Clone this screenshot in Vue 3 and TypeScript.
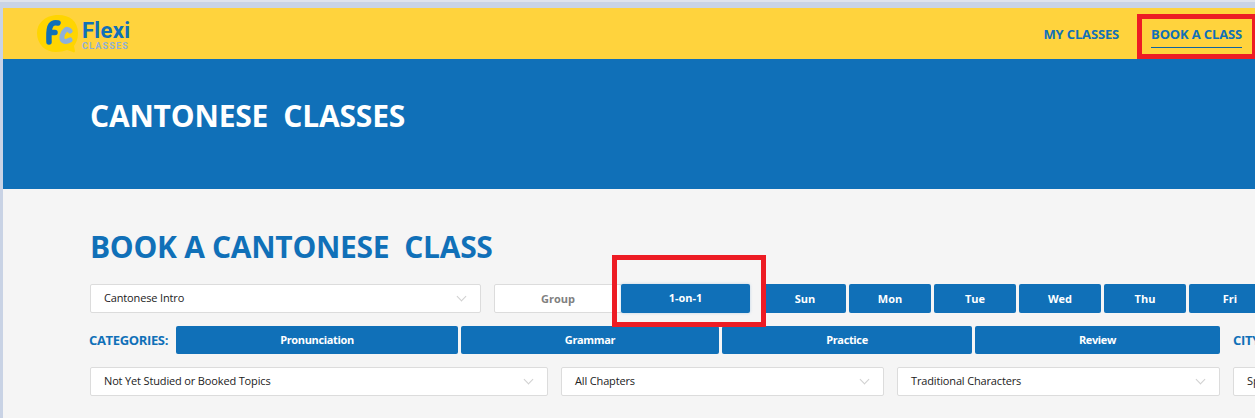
<script setup lang="ts">
const days = ['Sun', 'Mon', 'Tue', 'Wed', 'Thu', 'Fri']
const categories = ['Pronunciation', 'Grammar', 'Practice', 'Review']
const filters = [
  { label: 'Not Yet Studied or Booked Topics', w: 458 },
  { label: 'All Chapters', w: 323 },
  { label: 'Traditional Characters', w: 323 },
]
</script>

<template>
  <div class="page">
    <header class="topbar">
      <div class="logo">
        <svg class="logo-mark" width="42" height="40" viewBox="0 0 42 40">
          <path d="M19 1C31 0 41 6 41 19c0 6-2 10-4 13l1 5c0 1-1 2-2 1l-6-2c-3 1-7 2-11 2C8 38 0 30 0 19 0 9 8 2 19 1Z" fill="#ffd500" />
          <path d="M12 28C12 22 11 15 14 11C16 8 19 8.500 21 9M12 18.500H18" fill="none" stroke="#1070b8" stroke-width="5.500" stroke-linecap="round" stroke-linejoin="round" />
          <path d="M33 17C30 13 26 17 25 22C24 27 28 29 33 26" fill="none" stroke="#8fb0d8" stroke-width="5" stroke-linecap="round" />
        </svg>
        <div class="logo-text">
          <span class="logo-flexi">Flexi</span>
          <span class="logo-classes">CLASSES</span>
        </div>
      </div>
      <nav class="nav">
        <a class="nav-link">MY CLASSES</a>
        <a class="nav-link nav-active">BOOK A CLASS</a>
      </nav>
    </header>

    <section class="hero">
      <h1>CANTONESE&nbsp; CLASSES</h1>
    </section>

    <main class="content">
      <h2>BOOK A CANTONESE&nbsp; CLASS</h2>

      <div class="row row-one">
        <div class="select course"><span>Cantonese Intro</span><i class="chev"></i></div>
        <div class="type-group">
          <button class="btn-light">Group</button>
          <button class="btn type-active">1-on-1</button>
        </div>
        <div class="days">
          <button v-for="d in days" :key="d" class="btn day">{{ d }}</button>
        </div>
      </div>

      <div class="row row-two">
        <span class="label">CATEGORIES:</span>
        <div class="cats">
          <button v-for="(c, i) in categories" :key="c" class="btn" :class="'cat' + i">{{ c }}</button>
        </div>
        <span class="label city">CITY:</span>
      </div>

      <div class="row row-three">
        <div v-for="f in filters" :key="f.label" class="select" :style="{ width: f.w + 'px' }">
          <span>{{ f.label }}</span><i class="chev"></i>
        </div>
        <div class="select city-select"><span>Spanish</span></div>
      </div>
    </main>

    <div class="mark mark-nav"></div>
    <div class="mark mark-type"></div>
  </div>
</template>

<style>
html, body { margin: 0; overflow: hidden; }
</style>

<style scoped>
.page {
  position: relative;
  width: 1255px;
  height: 418px;
  overflow: hidden;
  box-sizing: border-box;
  padding: 6px 0 0 3px;
  border-top: 2px solid #dfe3eb;
  background: #c9d3e5;
  font-family: "Open Sans", "Noto Sans", sans-serif;
}
.topbar {
  height: 51px;
  background: #ffd33d;
  display: flex;
  align-items: center;
  justify-content: space-between;
}
.logo { display: flex; align-items: center; margin-left: 34px; margin-top: 1px; }
.logo-mark { display: block; }
.logo-text { display: flex; flex-direction: column; margin: 4px 0 0 3px; }
.logo-flexi { font: 700 22px/20px Roboto, sans-serif; color: #1070b8; letter-spacing: 0.3px; }
.logo-classes { font: 700 9px/10px Roboto, sans-serif; color: #8fb0d8; letter-spacing: 1.2px; }
.nav { display: flex; align-items: center; }
.nav-link {
  font-size: 13px;
  font-weight: 700;
  color: #1070b8;
  letter-spacing: -0.15px;
  line-height: 18px;
  white-space: nowrap;
  margin-top: 6px;
  padding-bottom: 4px;
  border-bottom: 1px solid transparent;
}
.nav-link:first-child { margin-right: 32px; }
.nav-active {
  margin-right: 13px;
  border-bottom-color: #0f639f;
}
.hero {
  height: 130px;
  background: #1070b8;
  box-sizing: border-box;
  padding: 38px 0 0 87px;
}
.hero h1 {
  margin: 0;
  font-size: 30px;
  line-height: 38px;
  font-weight: 700;
  color: #fff;
  letter-spacing: -0.2px;
}
.content {
  height: 229px;
  background: #f5f5f5;
  box-sizing: border-box;
  padding: 40px 0 0 87px;
}
.content h2 {
  margin: 0;
  font-size: 30px;
  line-height: 36px;
  font-weight: 700;
  color: #1070b8;
  letter-spacing: -0.3px;
}
.row { display: flex; width: 1300px; }
.row-one { margin-top: 19px; height: 29px; }
.row-two { margin-top: 13px; height: 28px; align-items: center; }
.row-three { margin-top: 13px; height: 29px; gap: 13px; }
.select {
  box-sizing: border-box;
  height: 29px;
  background: #fff;
  border: 1px solid #dcdcdc;
  border-radius: 2px;
  padding: 0 0 2px 13px;
  display: flex;
  align-items: center;
  justify-content: space-between;
  font-size: 11px;
  letter-spacing: -0.15px;
  color: #222;
  flex-shrink: 0;
}
.chev {
  width: 6px;
  height: 6px;
  margin: 0 15px 3px 0;
  border-right: 1px solid #d0d0d0;
  border-bottom: 1px solid #d0d0d0;
  transform: rotate(45deg);
}
.course { width: 391px; }
.city-select { width: 100px; }
button {
  font-family: inherit;
  font-weight: 700;
  font-size: 11px;
  border: 0;
  padding: 0 0 1px;
}
.btn {
  background: #1070b8;
  color: #fff;
  border-radius: 2px;
  flex-shrink: 0;
}
.type-group { display: flex; margin-left: 13px; position: relative; }
.btn-light {
  width: 128px;
  height: 29px;
  box-sizing: border-box;
  background: #fff;
  color: #808080;
  border: 1px solid #dcdcdc;
  border-radius: 2px;
}
.type-active {
  width: 129px;
  height: 29px;
  margin-left: -1px;
  padding-bottom: 2px;
  box-shadow: 0 0 3px rgba(16, 112, 184, 0.25);
}
.days { display: flex; gap: 3px; margin-left: 14px; }
.day { width: 82px; height: 29px; }
.label {
  font-size: 13px;
  font-weight: 700;
  color: #1070b8;
  letter-spacing: -0.35px;
  white-space: nowrap;
  margin-left: -1px;
  width: 87px;
  flex-shrink: 0;
}
.cats { display: flex; gap: 3px; }
.cats .btn { height: 28px; padding-bottom: 2px; letter-spacing: -0.35px; }
.cat0 { width: 282px; }
.cat1 { width: 258px; }
.cat2 { width: 250px; }
.cat3 { width: 245px; }
.city { margin-left: 13px; }
.mark {
  position: absolute;
  box-sizing: border-box;
  border: 5px solid #ed1c24;
}
.mark-nav { left: 1137px; top: 12px; width: 120px; height: 45px; }
.mark-type { left: 612px; top: 253px; width: 154px; height: 72px; }
</style>
